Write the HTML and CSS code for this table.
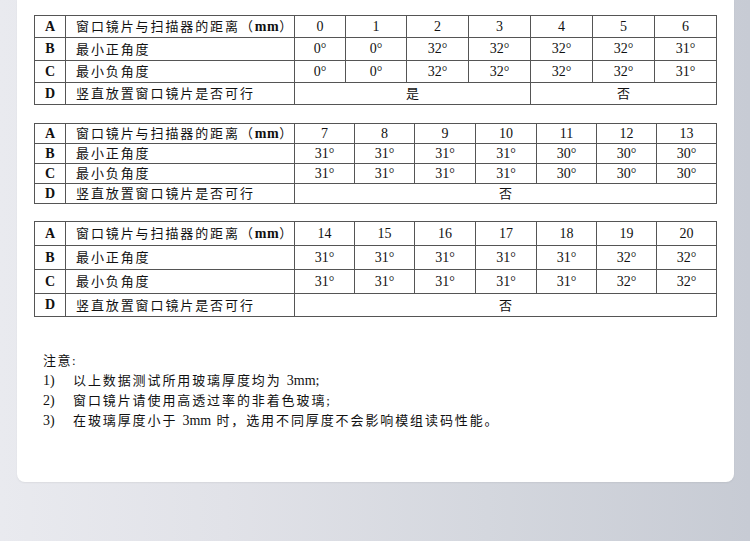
FILE: index.html
```html
<!DOCTYPE html>
<html lang="zh-CN">
<head>
<meta charset="utf-8">
<title>窗口镜片角度</title>
<link rel="stylesheet" href="styles.css">
</head>
<body>
<div class="page">
  <div class="card">
    <table class="spec t1">
      <colgroup>
        <col class="c-key"><col class="c-head">
        <col style="width:51px"><col style="width:61px"><col style="width:62px"><col style="width:62px"><col style="width:62px"><col style="width:62px"><col style="width:62px">
      </colgroup>
      <tr><td class="key">A</td><td class="head">窗口镜片与扫描器的距离（<span class="lat">mm</span>）</td><td>0</td><td>1</td><td>2</td><td>3</td><td>4</td><td>5</td><td>6</td></tr>
      <tr><td class="key">B</td><td class="head">最小正角度</td><td>0°</td><td>0°</td><td>32°</td><td>32°</td><td>32°</td><td>32°</td><td>31°</td></tr>
      <tr><td class="key">C</td><td class="head">最小负角度</td><td>0°</td><td>0°</td><td>32°</td><td>32°</td><td>32°</td><td>32°</td><td>31°</td></tr>
      <tr><td class="key">D</td><td class="head">竖直放置窗口镜片是否可行</td><td colspan="4" class="cn">是</td><td colspan="3" class="cn">否</td></tr>
    </table>

    <table class="spec t2">
      <colgroup>
        <col class="c-key"><col class="c-head">
        <col style="width:60px"><col style="width:60px"><col style="width:61px"><col style="width:61px"><col style="width:60px"><col style="width:60px"><col style="width:60px">
      </colgroup>
      <tr><td class="key">A</td><td class="head">窗口镜片与扫描器的距离（<span class="lat">mm</span>）</td><td>7</td><td>8</td><td>9</td><td>10</td><td>11</td><td>12</td><td>13</td></tr>
      <tr><td class="key">B</td><td class="head">最小正角度</td><td>31°</td><td>31°</td><td>31°</td><td>31°</td><td>30°</td><td>30°</td><td>30°</td></tr>
      <tr><td class="key">C</td><td class="head">最小负角度</td><td>31°</td><td>31°</td><td>31°</td><td>31°</td><td>30°</td><td>30°</td><td>30°</td></tr>
      <tr><td class="key">D</td><td class="head">竖直放置窗口镜片是否可行</td><td colspan="7" class="cn">否</td></tr>
    </table>

    <table class="spec t3">
      <colgroup>
        <col class="c-key"><col class="c-head">
        <col style="width:60px"><col style="width:60px"><col style="width:61px"><col style="width:61px"><col style="width:60px"><col style="width:60px"><col style="width:60px">
      </colgroup>
      <tr><td class="key">A</td><td class="head">窗口镜片与扫描器的距离（<span class="lat">mm</span>）</td><td>14</td><td>15</td><td>16</td><td>17</td><td>18</td><td>19</td><td>20</td></tr>
      <tr><td class="key">B</td><td class="head">最小正角度</td><td>31°</td><td>31°</td><td>31°</td><td>31°</td><td>31°</td><td>32°</td><td>32°</td></tr>
      <tr><td class="key">C</td><td class="head">最小负角度</td><td>31°</td><td>31°</td><td>31°</td><td>31°</td><td>31°</td><td>32°</td><td>32°</td></tr>
      <tr><td class="key">D</td><td class="head">竖直放置窗口镜片是否可行</td><td colspan="7" class="cn">否</td></tr>
    </table>

    <div class="notes">
      <div class="notes-title">注意:</div>
      <div class="note"><span class="num">1)</span><span class="txt">以上数据测试所用玻璃厚度均为 <span class="lat">3mm;</span></span></div>
      <div class="note"><span class="num">2)</span><span class="txt">窗口镜片请使用高透过率的非着色玻璃;</span></div>
      <div class="note"><span class="num">3)</span><span class="txt">在玻璃厚度小于 <span class="lat">3mm</span> 时，选用不同厚度不会影响模组读码性能。</span></div>
    </div>
  </div>
</div>
</body>
</html>
```

FILE: styles.css
```css
* { box-sizing: border-box; }
html, body { margin: 0; padding: 0; }
body {
  width: 750px;
  height: 541px;
  overflow: hidden;
  background: linear-gradient(90deg, #e9eaef 0%, #e1e2e8 30%, #d4d7de 65%, #c7cbd4 100%);
  font-family: "Liberation Serif", "Noto Sans CJK SC", serif;
  color: #111;
}
.page {
  padding: 0 16px 0 17px;
}
.card {
  background: #fff;
  height: 482px;
  border-radius: 0 0 8px 8px;
  box-shadow: 0 1px 2px rgba(0, 0, 0, 0.06);
  padding: 15px 18px 0 17px;
}
.spec {
  width: 682px;
  table-layout: fixed;
  border-collapse: collapse;
  font-size: 14px;
}
.spec td {
  border: 1px solid #555;
  padding: 0;
  text-align: center;
  vertical-align: middle;
  line-height: 1;
  white-space: nowrap;
  overflow: hidden;
}
.c-key { width: 31px; }
.c-head { width: 229px; }
.spec td.key {
  font-weight: 700;
  font-size: 14px;
}
.spec td.head {
  text-align: left;
  padding-left: 10px;
  font-size: 13px;
  letter-spacing: 1.9px;
}
.spec td.head .lat {
  font-size: 14px;
  font-weight: 700;
  letter-spacing: 0.5px;
}
.spec td.cn {
  font-size: 13px;
}
.t1 tr { height: 22px; }
.t1 tr:nth-child(2) { height: 23px; }
.t2 { margin-top: 18px; }
.t2 tr { height: 20px; }
.t3 { margin-top: 17px; }
.t3 tr { height: 24px; }
.t3 tr:last-child { height: 23px; }

.notes {
  margin: 34px 0 0 9px;
  font-size: 13px;
  line-height: 20px;
  color: #111;
}
.notes-title { letter-spacing: 1.5px; }
.note { display: flex; }
.note .num { width: 30px; flex: none; font-size: 14px; }
.note .txt { letter-spacing: 1.9px; }
.note .lat { font-size: 14px; letter-spacing: 0; }
```
